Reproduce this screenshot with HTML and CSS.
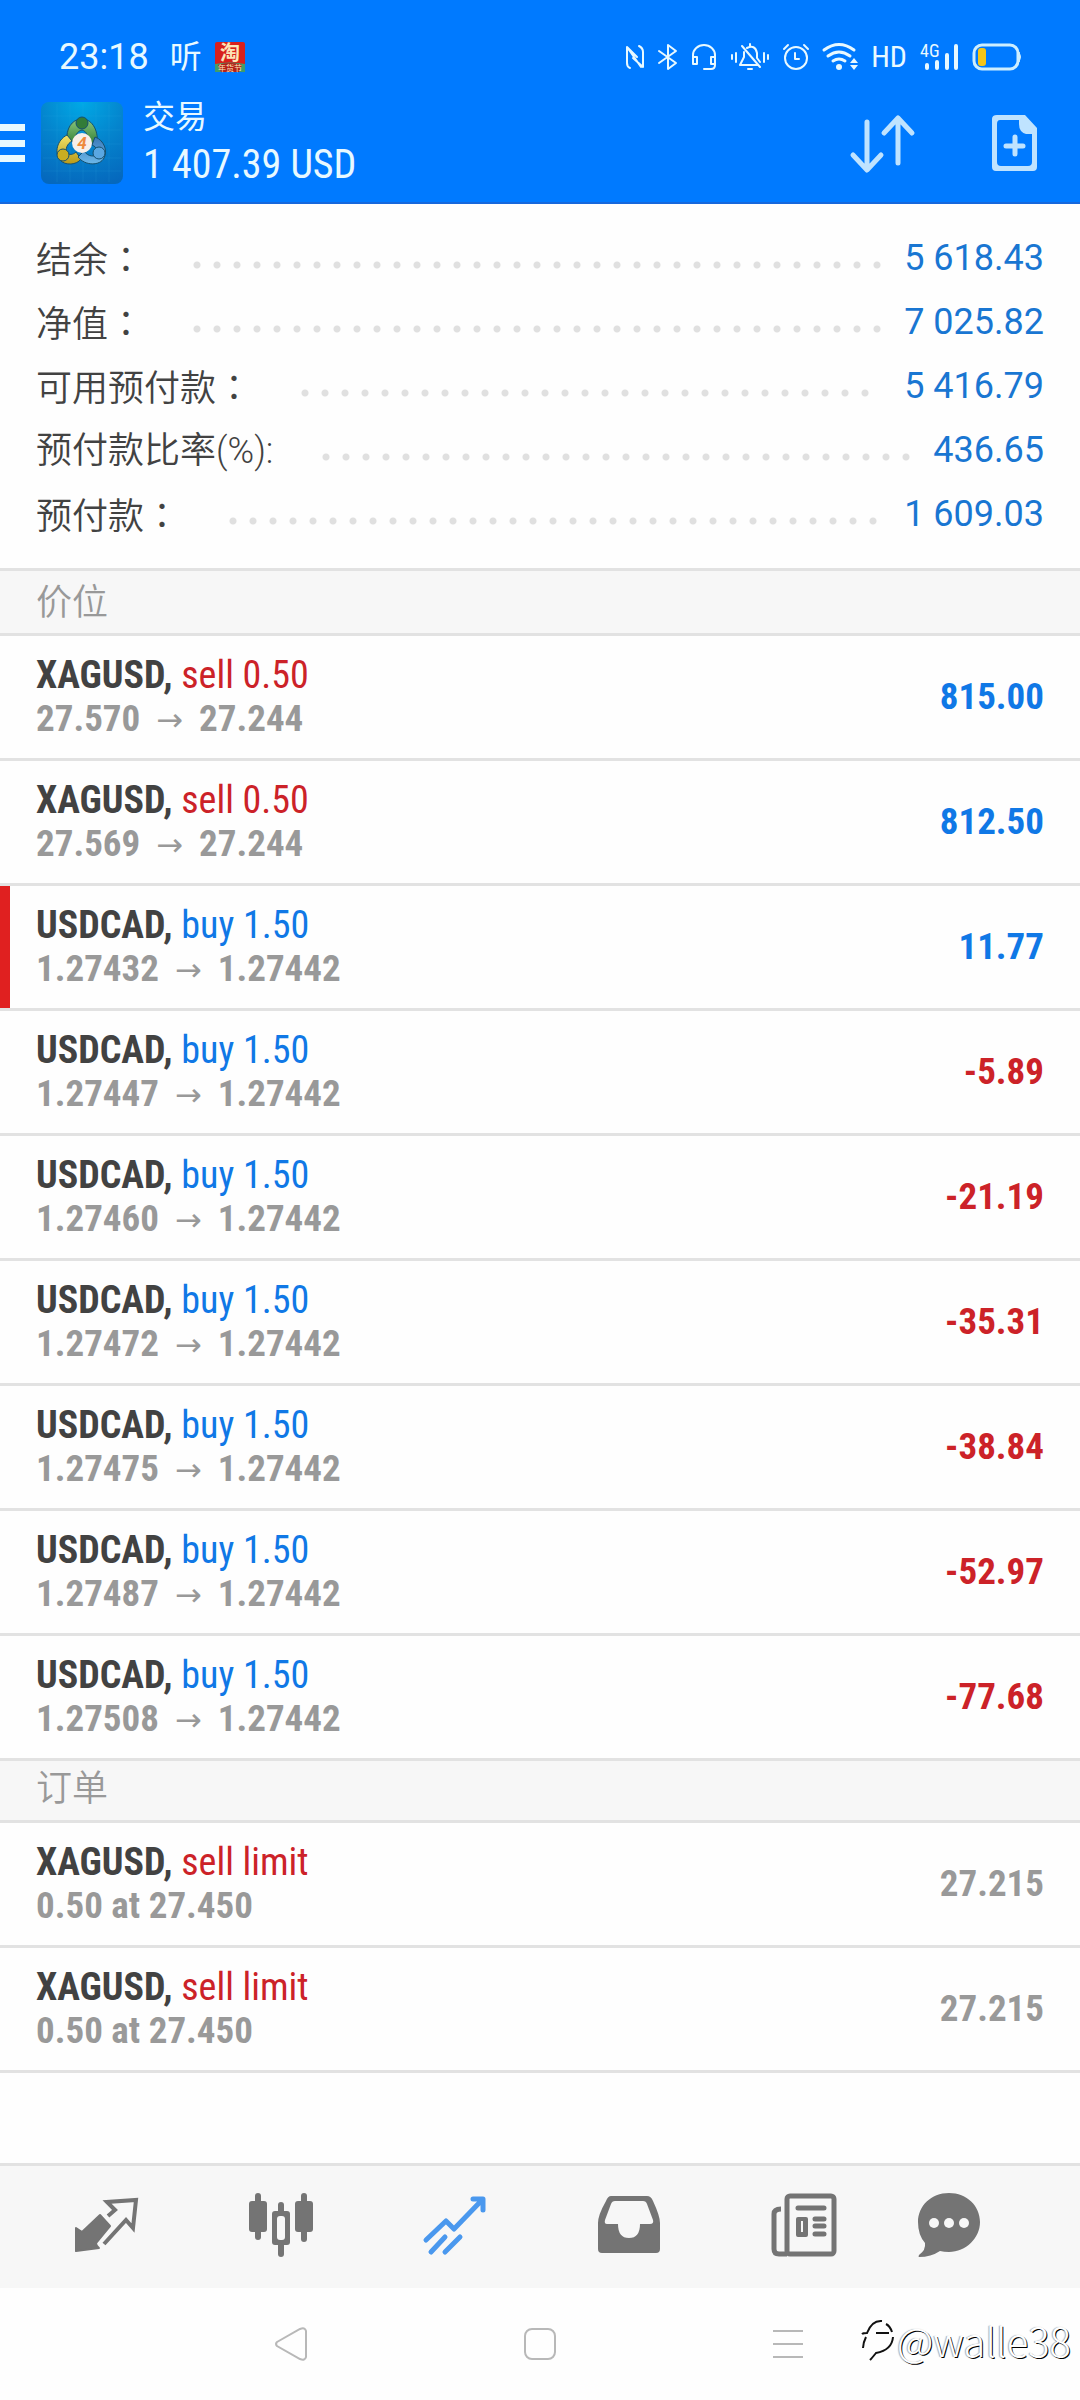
FILE: index.html
```html
<!DOCTYPE html>
<html lang="zh-CN">
<head>
<meta charset="utf-8">
<meta name="viewport" content="width=device-width, initial-scale=1">
<title>交易</title>
<link rel="stylesheet" href="styles.css">
</head>
<body>
<header class="top">
  <div class="status">
    <div class="status-left">
      <time class="clock">23:18</time>
      <span class="listen">听</span>
      <svg class="shop" width="30" height="30" viewBox="0 0 30 30" aria-hidden="true">
        <rect width="30" height="30" rx="2" fill="#d8201c"/>
        <path d="M0 22q15-3 30 0v8H0z" fill="#3f9d6a"/>
        <path d="M3 23q12-4 24 0l-3 7H6z" fill="#b3201a"/>
        <text x="15" y="18" text-anchor="middle" class="shop-name">淘</text>
        <text x="15" y="29" text-anchor="middle" class="shop-sub">年货节</text>
      </svg>
    </div>
    <div class="status-right">
      <svg width="20" height="28" viewBox="0 0 20 28" class="ln"><path d="M5 25Q2 24 2 20V4L16 24M14 3Q18 5 18 9V24L8 15M2 4l10 10"/></svg>
      <svg width="20" height="28" viewBox="0 0 20 28" class="ln"><path d="M1 8l17 12-8 6V2l8 6L1 20"/></svg>
      <svg width="26" height="28" viewBox="0 0 26 28" class="ln"><path d="M2 19V12a11 10 0 0 1 22 0V22q0 4-4 4H13M2 14h4v7H2zM20 14h4v7h-4z"/></svg>
      <svg width="40" height="28" viewBox="0 0 40 28" class="ln"><path d="M2 12v4M6 10v9M34 10v9M38 12v4M12 3l18 21M14 9v5l-4 8h17M17 5q8-4 10 5v5l3 4M20 1v2M18 26h4"/></svg>
      <svg width="26" height="28" viewBox="0 0 26 28" class="ln"><circle cx="13" cy="15" r="11"/><path d="M1 6l4-4M25 6l-4-4M12 10v6h4"/></svg>
      <svg width="36" height="28" viewBox="0 0 36 28"><g fill="none" stroke="#e8f9ff" stroke-width="3" stroke-linecap="round"><path d="M2 7q15-11 30 0M6 13q11-8 22 0M11 18q6-4 12 0"/></g><circle cx="17" cy="24" r="3" fill="#e8f9ff"/><path d="M28 20l4-5 4 5zM28 22l4 5 4-5z" fill="#e8f9ff"/></svg>
      <span class="hd">HD</span>
      <svg width="39" height="28" viewBox="0 0 39 28"><text x="0" y="14" class="net">4G</text><path d="M7 22v3M17 19v6M27 12v13M36 3v22" stroke="#e8f9ff" stroke-width="4" stroke-linecap="round"/></svg>
      <svg width="50" height="28" viewBox="0 0 50 28"><rect x="2" y="2" width="44" height="24" rx="8" fill="none" stroke="#cdeeff" stroke-width="3"/><rect x="6" y="5" width="8" height="18" rx="3" fill="#f5c518"/><path d="M47 9q3 5 0 10z" fill="#cdeeff" stroke="#cdeeff"/></svg>
    </div>
  </div>
  <div class="bar">
    <button class="menu" aria-label="菜单"><i></i><i></i><i></i></button>
    <svg class="logo" width="82" height="82" viewBox="0 0 82 82" aria-hidden="true">
      <defs>
        <radialGradient id="bg" cx="50%" cy="0%" r="105%"><stop offset="0" stop-color="#00a9e6"/><stop offset=".5" stop-color="#0484cd"/><stop offset="1" stop-color="#0568bd"/></radialGradient>
        <linearGradient id="gr" x2="0" y2="1"><stop offset="0" stop-color="#8cc77c"/><stop offset="1" stop-color="#2f7d35"/></linearGradient>
        <linearGradient id="ye" x2="0" y2="1"><stop offset="0" stop-color="#f0e36a"/><stop offset="1" stop-color="#b89a18"/></linearGradient>
        <linearGradient id="bl" x2="0" y2="1"><stop offset="0" stop-color="#3a78b8"/><stop offset="1" stop-color="#6cb8ea"/></linearGradient>
      </defs>
      <rect width="82" height="82" rx="8" fill="url(#bg)"/>
      <path d="M16 2v78M29 2v78M42 2v78M55 2v78M68 2v78M2 14h78M2 28h78M2 42h78M2 56h78M2 69h78" stroke="#36b3e8" stroke-opacity=".15" fill="none"/>
      <g stroke="#15506e" stroke-width="1">
        <path d="M41 17c11 0 17 13 15 26l-9-3c0-7-2-11-6-12-5 1-7 6-8 12l-7-2c-1-10 4-21 15-21z" fill="url(#gr)"/>
        <path d="M26 33c-10 5-13 18-7 25 5 6 17 5 21-1l-5-7c-3 3-7 3-9 1-2-4 0-9 5-12z" fill="url(#ye)"/>
        <path d="M54 35c9 3 13 14 9 21-4 8-19 8-26-1l6-6c4 6 11 6 13 3 1-3 0-7-5-9z" fill="url(#bl)"/>
        <circle cx="41" cy="21" r="6" fill="#327c38"/><circle cx="22" cy="53" r="6" fill="#c9ad20"/><circle cx="58" cy="51" r="6" fill="#5aa7e2"/>
      </g>
      <circle cx="41" cy="41" r="10" fill="#f7efe9"/>
      <text x="41" y="47" text-anchor="middle" class="logo-num">4</text>
    </svg>
    <h1 class="heading"><span class="title">交易</span><span class="profit">1 407.39 USD</span></h1>
    <button class="act" aria-label="排序"><svg width="64" height="58" viewBox="0 0 64 58"><path d="M17 8v46M3 41l14 15 14-15M48 49V4M34 19L48 4l14 15" fill="none" stroke="#bfe3ff" stroke-width="5" stroke-linecap="round" stroke-linejoin="round"/></svg></button>
    <button class="act" aria-label="新订单"><svg width="46" height="58" viewBox="0 0 46 58"><path d="M6 1H34L46 14V53q0 4-4 4H5q-4 0-4-4V5q0-4 5-4zM9 6q-3 0-3 4v38q0 4 4 4h27q4 0 4-4V20h-6q-7-2-7-10V6z" fill="#bfe3ff" fill-rule="evenodd"/><path d="M24 23v17M15 32h17" stroke="#bfe3ff" stroke-width="5" stroke-linecap="round"/></svg></button>
  </div>
</header>

<main class="content">
  <dl class="summary">
    <div class="line"><dt>结余<span class="colon" lang="zh-Hant">：</span></dt><dd class="lead"><i></i></dd><dd>5 618.43</dd></div>
    <div class="line"><dt>净值<span class="colon" lang="zh-Hant">：</span></dt><dd class="lead"><i></i></dd><dd>7 025.82</dd></div>
    <div class="line"><dt>可用预付款<span class="colon" lang="zh-Hant">：</span></dt><dd class="lead"><i></i></dd><dd>5 416.79</dd></div>
    <div class="line"><dt>预付款比率<span class="latin">(%):</span></dt><dd class="lead"><i></i></dd><dd>436.65</dd></div>
    <div class="line"><dt>预付款<span class="colon" lang="zh-Hant">：</span></dt><dd class="lead"><i></i></dd><dd>1 609.03</dd></div>
  </dl>

  <h2 class="section first">价位</h2>
  <ul class="list">
    <li class="row"><div><p class="name"><b>XAGUSD,</b> <span class="neg">sell 0.50</span></p><p class="price">27.570<span class="arrow">→</span>27.244</p></div><span class="value pos">815.00</span></li>
    <li class="row"><div><p class="name"><b>XAGUSD,</b> <span class="neg">sell 0.50</span></p><p class="price">27.569<span class="arrow">→</span>27.244</p></div><span class="value pos">812.50</span></li>
    <li class="row marked"><div><p class="name"><b>USDCAD,</b> <span class="pos">buy 1.50</span></p><p class="price">1.27432<span class="arrow">→</span>1.27442</p></div><span class="value pos">11.77</span></li>
    <li class="row"><div><p class="name"><b>USDCAD,</b> <span class="pos">buy 1.50</span></p><p class="price">1.27447<span class="arrow">→</span>1.27442</p></div><span class="value neg">-5.89</span></li>
    <li class="row"><div><p class="name"><b>USDCAD,</b> <span class="pos">buy 1.50</span></p><p class="price">1.27460<span class="arrow">→</span>1.27442</p></div><span class="value neg">-21.19</span></li>
    <li class="row"><div><p class="name"><b>USDCAD,</b> <span class="pos">buy 1.50</span></p><p class="price">1.27472<span class="arrow">→</span>1.27442</p></div><span class="value neg">-35.31</span></li>
    <li class="row"><div><p class="name"><b>USDCAD,</b> <span class="pos">buy 1.50</span></p><p class="price">1.27475<span class="arrow">→</span>1.27442</p></div><span class="value neg">-38.84</span></li>
    <li class="row"><div><p class="name"><b>USDCAD,</b> <span class="pos">buy 1.50</span></p><p class="price">1.27487<span class="arrow">→</span>1.27442</p></div><span class="value neg">-52.97</span></li>
    <li class="row"><div><p class="name"><b>USDCAD,</b> <span class="pos">buy 1.50</span></p><p class="price">1.27508<span class="arrow">→</span>1.27442</p></div><span class="value neg">-77.68</span></li>
  </ul>

  <h2 class="section">订单</h2>
  <ul class="list">
    <li class="row"><div><p class="name"><b>XAGUSD,</b> <span class="neg">sell limit</span></p><p class="price">0.50 at 27.450</p></div><span class="value">27.215</span></li>
    <li class="row"><div><p class="name"><b>XAGUSD,</b> <span class="neg">sell limit</span></p><p class="price">0.50 at 27.450</p></div><span class="value">27.215</span></li>
  </ul>
</main>

<nav class="tabs" aria-label="主导航">
  <button aria-label="行情"><svg viewBox="0 0 64 64"><path d="M26 22L36 33 22 50q0 3 3 5L2 58V35l6 4z" fill="#747474" stroke="#747474" stroke-width="2" stroke-linejoin="round"/><path d="M34 23l7-6-8-8 29-2-3 28-7-8-22 24" fill="none" stroke="#747474" stroke-width="4"/></svg></button>
  <button aria-label="图表"><svg viewBox="0 0 64 64"><g fill="#747474"><rect x="6" y="0" width="6" height="47" rx="3"/><rect x="0" y="8" width="18" height="31" rx="3"/><rect x="52" y="0" width="6" height="49" rx="3"/><rect x="46" y="8" width="18" height="31" rx="3"/><rect x="29" y="9" width="6" height="55" rx="3"/><rect x="23" y="18" width="18" height="34" rx="3"/></g><rect x="28" y="23" width="8" height="24" rx="3" fill="#f7f7f7"/></svg></button>
  <button aria-label="交易" aria-current="page"><svg viewBox="0 0 64 64" fill="none" stroke="#4a98ee" stroke-width="5" stroke-linecap="round" stroke-linejoin="round"><path d="M3 47L23 28l8 8L59 7M50 6h10v11M8 59l14-15M22 59l15-15"/></svg></button>
  <button aria-label="历史"><svg viewBox="0 0 64 64"><path d="M14 3H50q4 0 6 5 7 15 7 22V56q0 4-4 4H5q-4 0-4-4V30Q1 22 9 8q2-5 5-5zM18 8q-3 0-4 3L8 27q-1 4 2 4H21q0 14 11 14T43 31H53q4 0 3-4L50 11q-1-3-4-3z" fill="#747474" fill-rule="evenodd"/></svg></button>
  <button aria-label="新闻"><svg viewBox="0 0 64 64"><g fill="none" stroke="#747474" stroke-width="5"><rect x="15" y="3" width="47" height="58" rx="3"/><path d="M9 16q-7 0-7 5V56q0 5 5 5h8"/></g><path d="M26 15h26M43 26h9M43 33h9M43 41h9" stroke="#747474" stroke-width="5" stroke-linecap="round"/><path d="M26 24h8q2 0 2 2v16q0 2-2 2h-8q-2 0-2-2V26q0-2 2-2zM29 28v11h2V28z" fill="#747474" fill-rule="evenodd"/></svg></button>
  <button aria-label="消息"><svg viewBox="0 0 64 64"><path d="M32 0C50 0 63 13 63 29S49 59 32 59q-5 0-9-1-9 6-21 6-1 0 0-2 7-5 6-12Q1 42 1 29C1 13 14 0 32 0z" fill="#747474"/><g fill="#f7f7f7"><circle cx="17" cy="30" r="5"/><circle cx="32" cy="30" r="5"/><circle cx="47" cy="30" r="5"/></g></svg></button>
</nav>

<footer class="system">
  <button aria-label="返回"><svg width="34" height="36" viewBox="0 0 34 36"><path d="M3 16L26 3q5-2 6 2v26q-1 4-6 2L3 20q-2-2 0-4z"/></svg></button>
  <button aria-label="主屏幕"><svg width="32" height="32" viewBox="0 0 32 32"><rect x="1" y="1" width="30" height="30" rx="7"/></svg></button>
  <button aria-label="最近任务"><svg width="32" height="30" viewBox="0 0 32 30"><path d="M1 2h30M1 15h30M1 28h30"/></svg></button>
  <div class="mark">
    <svg width="34" height="42" viewBox="0 0 34 42"><path d="M1 15q1-1 5-1Q11 1 21 2M15 14h13M32 18q-1 13-17 16-4 5-6 7M5 18Q2 24 2 29M25 5q4 2 6 8"/></svg>
    <span>@walle38</span>
  </div>
</footer>
</body>
</html>
```
FILE: styles.css
```css
* { box-sizing: border-box; margin: 0; padding: 0; }

body {
  min-height: 100vh;
  display: flex;
  flex-direction: column;
  background: #fefefe;
  color: #424242;
  font-family: Roboto, "Noto Sans CJK SC", sans-serif;
}

button {
  border: 0;
  background: none;
  display: flex;
  align-items: center;
  justify-content: center;
}

svg { display: block; flex: none; overflow: visible; }
ul { list-style: none; }

/* Header */
.top {
  background: #007aff;
  border-bottom: 2px solid #1668dc;
  color: #e8f9ff;
  padding: 20px 0 14px;
}

.status {
  display: flex;
  justify-content: space-between;
  align-items: center;
  height: 74px;
  padding: 0 58px 0 59px;
}

.status-left, .status-right { display: flex; align-items: center; }
.clock { font-size: 36px; line-height: 40px; }
.listen { margin-left: 21px; font-size: 32px; line-height: 40px; }
.shop { margin-left: 13px; }
.shop-name { font: 700 20px "Noto Sans CJK SC", sans-serif; fill: #fbe6b8; }
.shop-sub { font: 8px "Noto Sans CJK SC", sans-serif; fill: #fbe6b8; }
.status-right { gap: 13px; }
.ln { fill: none; stroke: #e8f9ff; stroke-width: 2px; stroke-linecap: round; stroke-linejoin: round; }
.hd { font: 30px/32px "Roboto Condensed", Roboto, sans-serif; }
.net { font: 18px "Roboto Condensed", Roboto, sans-serif; fill: #e8f9ff; }

.bar { display: flex; align-items: center; height: 94px; padding: 4px 43px 0 0; }
.menu { width: 25px; height: 38px; flex-direction: column; justify-content: space-between; align-items: stretch; }
.menu i { height: 7px; background: #e8f9ff; }
.logo { margin-left: 16px; }
.logo-num { font: italic 700 17px Roboto, sans-serif; fill: #ee8a3c; }
.heading { flex: 1; display: flex; flex-direction: column; margin-left: 20px; font-weight: 400; }
.title { font-size: 32px; line-height: 44px; }
.profit { font: 40px/52px "Roboto Condensed", Roboto, sans-serif; }
.act + .act { margin-left: 77px; }

/* Account summary */
.summary { padding: 22px 36px; }
.line { display: flex; align-items: center; height: 64px; font-size: 36px; line-height: 44px; }
.line dt { padding-bottom: 2px; font-weight: 350; font-family: "Noto Sans CJK SC", sans-serif; }
.colon { font-family: "Noto Sans CJK TC", sans-serif; }
.latin { font-family: Roboto, sans-serif; font-weight: 300; }
.line dd { color: #1976d2; }
.line .lead { flex: 1; margin: 14px 14px 0 43px; }
.lead i {
  display: block;
  height: 8px;
  width: round(down, 100%, 20px);
  background: radial-gradient(circle at center, #e0e0e0 3px, transparent 4px) 0 0 / 20px 8px;
}

/* Lists */
.section {
  height: 62px;
  padding-left: 36px;
  background: #f7f7f7;
  border-bottom: 3px solid #e2e2e2;
  color: #999;
  font: 350 36px/48px "Noto Sans CJK SC", sans-serif;
}
.section.first { height: 68px; border-top: 3px solid #e2e2e2; line-height: 56px; }

.row {
  display: flex;
  justify-content: space-between;
  align-items: center;
  height: 125px;
  padding: 0 36px;
  border-bottom: 3px solid #e2e2e2;
  font: 38px/44px "Roboto Condensed", Roboto, sans-serif;
}
.marked { box-shadow: inset 10px 0 #e02020; }
.price, .value { font-weight: 700; font-size: 37px; color: #999; }
.arrow { margin: 0 16px; font: 32px/32px "DejaVu Sans", sans-serif; }
.row .pos { color: #1078e6; }
.row .neg { color: #cc2228; }

/* Bottom tabs */
.tabs {
  display: grid;
  grid-template-columns: repeat(5, 3fr) 2fr;
  height: 125px;
  margin-top: auto;
  padding: 0 73px 4px 19px;
  background: #f7f7f7;
  border-top: 3px solid #e2e2e2;
}
.tabs svg { width: 64px; height: 64px; }

/* System bar */
.system {
  position: relative;
  display: flex;
  justify-content: center;
  align-items: center;
  gap: 216px;
  height: 112px;
  padding-right: 3px;
}
.system svg { fill: none; stroke: #b8b8b8; stroke-width: 2px; }
.system .mark {
  position: absolute;
  right: 9px;
  bottom: 36px;
  display: flex;
  align-items: center;
  gap: 2px;
  color: #fff;
  font: 300 40px/48px "Noto Sans CJK SC", sans-serif;
  text-shadow: 1px 1px 0 #000, -1px 0 1px #aaa;
}
.system .mark svg { stroke: #111; }
```
